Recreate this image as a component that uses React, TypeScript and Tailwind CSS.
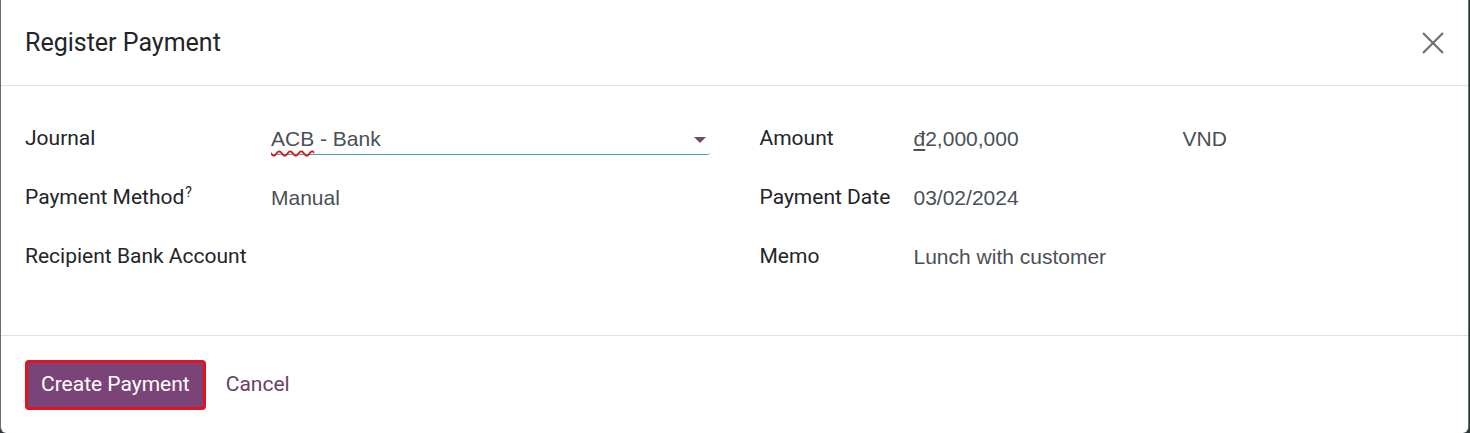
import React from 'react';

const leftRows = [
  { label: 'Journal', kind: 'select' },
  { label: 'Payment Method', kind: 'text', value: 'Manual', help: true },
  { label: 'Recipient Bank Account', kind: 'empty' },
];

const rightRows = [
  { label: 'Amount', kind: 'amount' },
  { label: 'Payment Date', kind: 'text', value: '03/02/2024' },
  { label: 'Memo', kind: 'text', value: 'Lunch with customer' },
];

function Field({ row }: { row: { label: string; kind: string; value?: string; help?: boolean } }) {
  if (row.kind === 'select') {
    return (
      <div className="relative flex h-[33px] w-full items-center rounded-b-[3px] border-b border-[#4aa5aa] pt-[2px]">
        <span>
          <span className="underline decoration-wavy decoration-[#cc2020] decoration-[1.5px] underline-offset-[4px]">ACB</span> - Bank
        </span>
        <span className="absolute right-[4px] top-[15px] h-0 w-0 border-x-[6px] border-t-[6px] border-x-transparent border-t-[#714b67]" />
      </div>
    );
  }
  if (row.kind === 'amount') {
    return (
      <div className="flex items-center">
        <span className="w-[269px]">
          <span className="underline decoration-[1.5px] underline-offset-[3px]">đ</span>2,000,000
        </span>
        <span>VND</span>
      </div>
    );
  }
  if (row.kind === 'empty') return <div />;
  return <span>{row.value}</span>;
}

function Group({ rows, labelWidth }: { rows: typeof leftRows; labelWidth: string }) {
  return (
    <div className="flex flex-col">
      {rows.map((row) => (
        <div key={row.label} className={`grid h-[59px] items-center ${labelWidth}`}>
          <div className="text-[#212529]">
            {row.label}
            {'help' in row && row.help && <sup className="ml-[1px] text-[14px]">?</sup>}
          </div>
          <div className="text-[#4a5057]" style={{ fontFamily: '"Liberation Sans", Arial, sans-serif' }}>
            <Field row={row} />
          </div>
        </div>
      ))}
    </div>
  );
}

export default function App() {
  return (
    <div className="h-[433px] w-[1470px] overflow-hidden bg-[#28383d]" style={{ fontFamily: 'Roboto, "Liberation Sans", sans-serif' }}>
      <div className="flex h-[433px] w-[1469px] flex-col rounded-b-[6px] border-x border-[#6b6b6b] bg-white text-[21px]">
        <div className="flex h-[86px] shrink-0 items-center justify-between border-b border-[#dee2e6] pl-[24px] pr-[23px] pt-[1px]">
          <h4 className="text-[25px] text-[#212529]">Register Payment</h4>
          <svg width="24" height="24" viewBox="0 0 24 24" className="text-[#707070]">
            <path d="M2 2 L22 22 M22 2 L2 22" stroke="currentColor" strokeWidth="2.2" fill="none" />
          </svg>
        </div>
        <div className="grid grid-cols-2 gap-[50px] border-b border-[#dee2e6] px-[24px] pb-[49px] pt-[23px]">
          <Group rows={leftRows} labelWidth="grid-cols-[246px_1fr]" />
          <Group rows={rightRows} labelWidth="grid-cols-[154px_1fr]" />
        </div>
        <div className="flex flex-1 items-center gap-[20px] px-[24px] pt-[1px]">
          <button className="h-[50px] rounded-[4px] border-[3px] border-[#e0141e] bg-[#7b4479] px-[13px] text-[21px] text-white">
            Create Payment
          </button>
          <button className="text-[21px] text-[#6b3f66]">Cancel</button>
        </div>
      </div>
    </div>
  );
}
